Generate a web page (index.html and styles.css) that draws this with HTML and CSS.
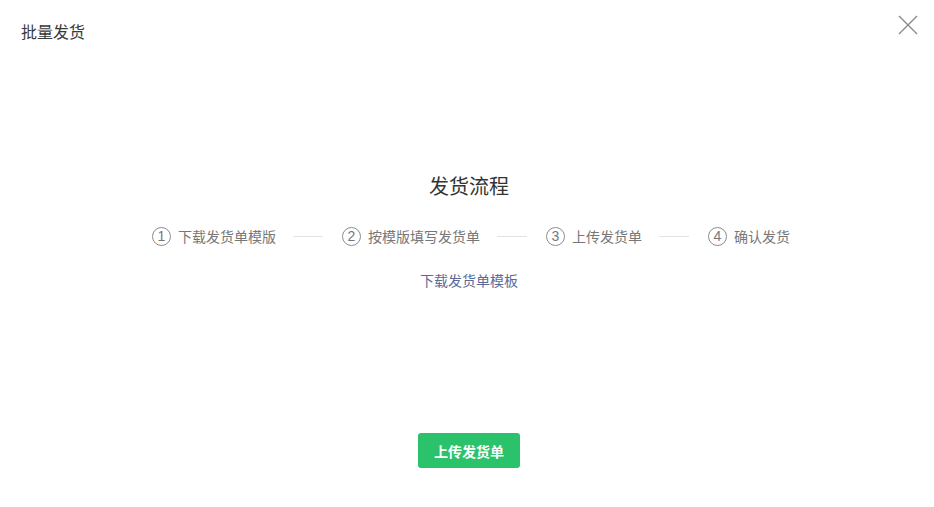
FILE: index.html
```html
<!DOCTYPE html>
<html lang="zh-CN">
<head>
    <meta charset="UTF-8">
    <meta name="viewport" content="width=device-width, initial-scale=1.0">
    <title>批量发货</title>
    <link rel="stylesheet" href="styles.css">
</head>
<body>
    <div class="dialog">
        <div class="dialog-header">
            <span class="dialog-title">批量发货</span>
            <a class="dialog-close" href="#" title="关闭">
                <svg width="20" height="20" viewBox="0 0 20 20">
                    <path d="M1 1 L19 19 M19 1 L1 19" stroke="#8a8a8a" stroke-width="1.4" fill="none"/>
                </svg>
            </a>
        </div>

        <div class="dialog-body">
            <h2 class="flow-title">发货流程</h2>
            <div class="steps">
                <div class="step"><span class="step-num">1</span><span class="step-text">下载发货单模版</span></div>
                <div class="step-line"></div>
                <div class="step"><span class="step-num">2</span><span class="step-text">按模版填写发货单</span></div>
                <div class="step-line"></div>
                <div class="step"><span class="step-num">3</span><span class="step-text">上传发货单</span></div>
                <div class="step-line"></div>
                <div class="step"><span class="step-num">4</span><span class="step-text">确认发货</span></div>
            </div>
            <a class="template-link" href="#">下载发货单模板</a>
            <button class="upload-btn">上传发货单</button>
        </div>
    </div>
</body>
</html>
```

FILE: styles.css
```css
body {
    margin: 0;
    background: #fff;
    font-family: "Noto Sans CJK SC", "Noto Sans", sans-serif;
    color: #333;
}
.dialog {
    position: relative;
    width: 934px;
    height: 507px;
}
.dialog-header {
    height: 64px;
    padding: 21px 21px 0;
    box-sizing: border-box;
}
.dialog-title {
    display: block;
    font-size: 16px;
    line-height: 20px;
    color: #3a3a3a;
}
.dialog-close {
    position: absolute;
    top: 15px;
    right: 16px;
    width: 20px;
    height: 20px;
    display: block;
}
.dialog-close svg {
    display: block;
}
.dialog-body {
    display: flex;
    flex-direction: column;
    align-items: center;
    padding-top: 108px;
    padding-left: 4px;
}
.flow-title {
    margin: 0;
    font-size: 20px;
    line-height: 28px;
    font-weight: normal;
    color: #333;
}
.steps {
    display: flex;
    align-items: center;
    margin-top: 26px;
    padding-left: 4px;
    height: 20px;
}
.step {
    display: flex;
    align-items: center;
}
.step-num {
    width: 19px;
    height: 19px;
    box-sizing: border-box;
    border: 1px solid #8c8c8c;
    border-radius: 50%;
    font-family: "Liberation Sans", Arial, sans-serif;
    font-size: 14px;
    line-height: 17px;
    text-align: center;
    color: #777;
    margin-right: 7px;
}
.step-text {
    font-size: 14px;
    line-height: 20px;
    color: #777;
}
.step-line {
    width: 30px;
    height: 1px;
    background: #e2e2e2;
    margin: 0 19px 0 17px;
}
.template-link {
    margin-top: 24px;
    font-size: 14px;
    line-height: 20px;
    color: #5a6b9a;
    text-decoration: none;
}
.upload-btn {
    margin-top: 143px;
    width: 102px;
    height: 35px;
    border: none;
    border-radius: 3px;
    background: #2bc26c;
    color: #fff;
    font-family: "Noto Sans CJK SC", sans-serif;
    font-size: 14px;
    font-weight: bold;
    cursor: pointer;
}
```
